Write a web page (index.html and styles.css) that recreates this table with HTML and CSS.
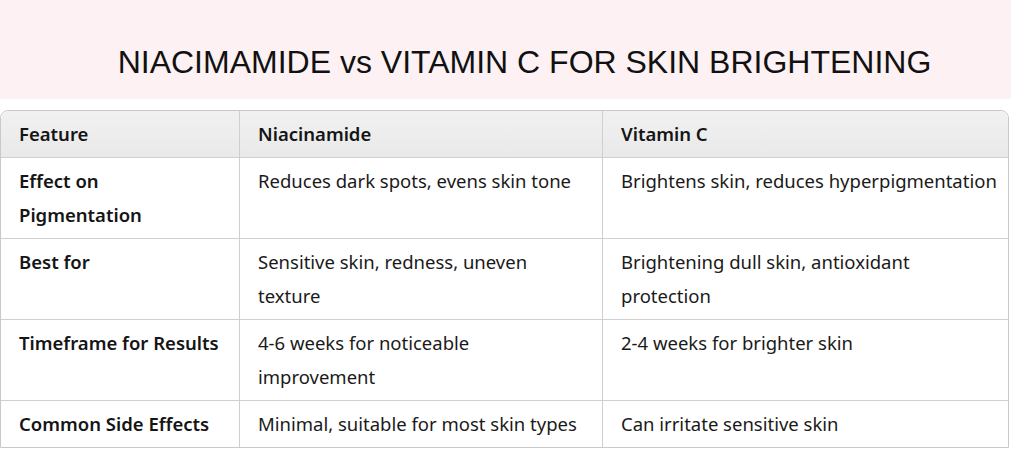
FILE: index.html
```html
<!DOCTYPE html>
<html>
<head>
<meta charset="utf-8">
<link rel="stylesheet" href="styles.css">
</head>
<body>
<header class="banner">
  <h1 class="title">NIACIMAMIDE vs VITAMIN C FOR SKIN BRIGHTENING</h1>
</header>
<table class="compare">
  <colgroup>
    <col class="c1"><col class="c2"><col class="c3">
  </colgroup>
  <thead>
    <tr><th>Feature</th><th>Niacinamide</th><th>Vitamin C</th></tr>
  </thead>
  <tbody>
    <tr><td class="feat">Effect on Pigmentation</td><td>Reduces dark spots, evens skin tone</td><td>Brightens skin, reduces hyperpigmentation</td></tr>
    <tr><td class="feat">Best for</td><td>Sensitive skin, redness, uneven texture</td><td>Brightening dull skin, antioxidant protection</td></tr>
    <tr><td class="feat">Timeframe for Results</td><td>4-6 weeks for noticeable improvement</td><td>2-4 weeks for brighter skin</td></tr>
    <tr><td class="feat">Common Side Effects</td><td>Minimal, suitable for most skin types</td><td>Can irritate sensitive skin</td></tr>
  </tbody>
</table>
</body>
</html>
```
FILE: styles.css
```css
html, body {
  margin: 0;
  padding: 0;
  background: #ffffff;
}
body {
  width: 1011px;
  height: 449px;
  overflow: hidden;
  font-family: "Noto Sans", "Open Sans", sans-serif;
  color: #1a1a1a;
}
.banner {
  background: #fdf1f4;
  height: 99px;
  display: flex;
  align-items: center;
  justify-content: center;
  padding-left: 38px;
  box-sizing: border-box;
}
.title {
  margin: 0;
  padding-top: 26px;
  font-family: "Liberation Sans", Arial, sans-serif;
  font-weight: normal;
  font-size: 32px;
  color: #111;
  letter-spacing: 0;
}
.compare {
  margin-top: 11px;
  width: 1009px;
  border-collapse: separate;
  border-spacing: 0;
  border: 1px solid #c9c9c9;
  border-radius: 8px 8px 0 0;
  table-layout: fixed;
  font-size: 18.5px;
  line-height: 34px;
}
.c1 { width: 239px; }
.c2 { width: 363px; }
.c3 { width: auto; }
.compare th,
.compare td {
  text-align: left;
  vertical-align: top;
  padding: 6px 18px 6px 18px;
  border-bottom: 1px solid #cfcfcf;
  border-right: 1px solid #cfcfcf;
}
.compare th:last-child,
.compare td:last-child {
  border-right: none;
  padding-right: 4px;
}
.compare tbody tr:last-child td {
  border-bottom: none;
}
.compare th {
  background: linear-gradient(#f1f1f1, #e9e9e9);
  font-weight: 600;
  color: #151515;
}
.compare th:first-child { border-top-left-radius: 8px; }
.compare th:last-child { border-top-right-radius: 8px; }
.feat {
  font-weight: 600;
  color: #151515;
}
```
